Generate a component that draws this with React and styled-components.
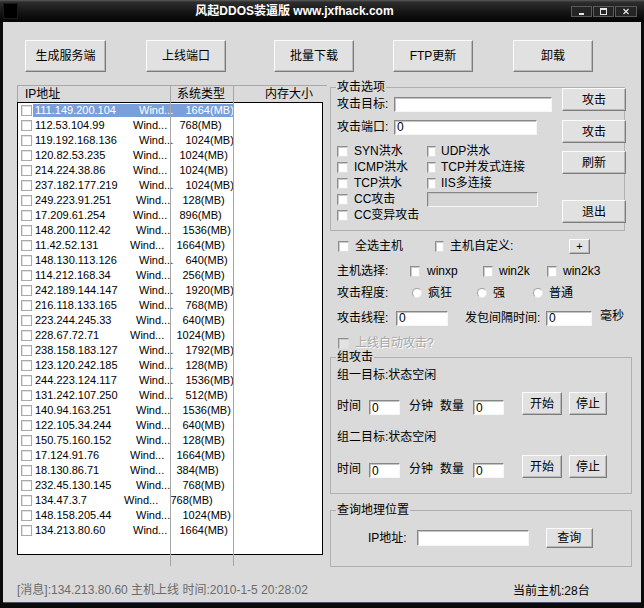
import React from 'react';
import styled, { createGlobalStyle } from 'styled-components';

const FONT = `"Liberation Sans", "Noto Sans CJK SC", sans-serif`;
const BG = '#dadada';

const Global = createGlobalStyle`
  html, body { margin: 0; padding: 0; background: #000; }
  body { font-family: ${FONT}; font-size: 12px; color: #000; }
  * { box-sizing: border-box; }
`;

const Window = styled.div`
  width: 644px;
  height: 608px;
  display: flex;
  flex-direction: column;
  background: #000;
  overflow: hidden;
`;

const TitleBar = styled.div`
  flex: 0 0 22px;
  height: 22px;
  display: flex;
  align-items: center;
  background: linear-gradient(#5c5c5c 0px, #2e2e2e 2px, #151515 55%, #040404 100%);
`;

const AppIcon = styled.div`
  width: 15px;
  height: 16px;
  margin-left: 3px;
  background: #000;
  border: 1px solid #1a1a1a;
`;

const TitleText = styled.div`
  flex: 1;
  text-align: center;
  color: #fff;
  font-weight: bold;
  font-size: 12px;
  line-height: 22px;
  white-space: nowrap;
`;

const CaptionButtons = styled.div`
  display: flex;
  gap: 1px;
  margin-right: 7px;
  margin-top: 1px;
`;

const CaptionBtn = styled.div`
  width: ${p => p.$w}px;
  height: 11px;
  background: #252525;
  border: 1px solid #5a5a5a;
  display: flex;
  align-items: center;
  justify-content: center;
`;

const Body = styled.div`
  flex: 1;
  background: ${BG};
  border-left: 3px solid #0a0a0a;
  border-right: 3px solid #0a0a0a;
  border-bottom: 5px solid #0a0a0a;
  box-shadow: inset 0 -1px 0 #4a5464;
  display: flex;
  flex-direction: column;
`;

const Toolbar = styled.div`
  display: flex;
  padding: 18px 0 0 22px;
`;

const Btn = styled.button`
  flex: none;
  width: ${p => p.$w}px;
  height: ${p => p.$h}px;
  margin-left: ${p => p.$ml || 0}px;
  margin-top: ${p => p.$mt || 0}px;
  padding: 0;
  background: #e1e1e1;
  border: 1px solid;
  border-color: #fbfbfb #7c7c7c #7c7c7c #fbfbfb;
  box-shadow: inset -1px -1px 0 #b8b8b8;
  font-family: ${FONT};
  font-size: 12px;
  color: #000;
  line-height: 1;
`;

const Main = styled.div`
  display: flex;
  margin-top: 8px;
  height: 486px;
`;

const LeftCol = styled.div`
  flex: none;
  width: 327px;
  padding: 5px 0 0 14px;
`;

const ListView = styled.div`
  position: relative;
  width: 310px;
`;

const ListHeader = styled.div`
  display: flex;
  height: 17px;
  border-top: 1px solid #a8a8a8;
  border-left: 1px solid #a8a8a8;
  line-height: 16px;
`;

const HeaderCell = styled.div`
  flex: none;
  width: ${p => p.$w}px;
  padding-left: ${p => p.$pl}px;
  white-space: nowrap;
`;

const ListBox = styled.div`
  width: 306px;
  height: 453px;
  border: 1px solid #000;
  background: #fff;
`;

const ColumnLine = styled.div`
  position: absolute;
  top: 0;
  left: ${p => p.$x}px;
  width: 1px;
  height: 481px;
  background: #a6a6a6;
`;

const Row = styled.div`
  display: flex;
  align-items: center;
  height: 15px;
`;

const RowCheck = styled.span`
  flex: none;
  width: 11px;
  height: 11px;
  margin-left: 3px;
  background: #fff;
  border: 1px solid #a9a9a9;
  box-shadow: inset 1px 1px 0 #e2e2e2;
`;

const RowBody = styled.div`
  flex: none;
  display: flex;
  align-items: center;
  width: 200px;
  height: 13px;
  margin-left: 1px;
  font-size: 11px;
  line-height: 13px;
  white-space: nowrap;
  background: ${p => (p.$selected ? '#7b9fda' : 'transparent')};
  color: ${p => (p.$selected ? '#fff' : '#000')};
`;

const IpCell = styled.span`
  flex: none;
  width: ${p => p.$w}px;
  padding-left: 2px;
`;

const WindCell = styled.span`
  flex: none;
  width: 46.5px;
`;

const MemCell = styled.span`
  flex: none;
`;

const RightCol = styled.div`
  flex: none;
  width: 302px;
  display: flex;
  flex-direction: column;
`;

const Group = styled.div`
  position: relative;
  flex: none;
  width: ${p => p.$w}px;
  margin-top: ${p => p.$mt}px;
  border: 1px solid #b0b0b0;
`;

const GroupTitle = styled.span`
  position: absolute;
  top: -8px;
  left: 5px;
  padding: 0 1px;
  background: ${BG};
  line-height: 15px;
  white-space: nowrap;
`;

const AttackGroup = styled(Group)`
  display: flex;
  align-items: flex-start;
  padding: 0 0 7px 6px;
`;

const Fields = styled.div`
  display: flex;
  flex-direction: column;
`;

const FieldRow = styled.div`
  display: flex;
  align-items: center;
  height: ${p => p.$h || 16}px;
  margin-top: ${p => p.$mt || 0}px;
`;

const Slot = styled.div`
  flex: none;
  width: ${p => p.$w}px;
  margin-left: ${p => p.$ml || 0}px;
  display: flex;
  align-items: center;
`;

const Label = styled.span`
  flex: none;
  white-space: nowrap;
  line-height: 15px;
  margin-left: ${p => p.$ml || 0}px;
  margin-bottom: ${p => p.$mb || 0}px;
  color: ${p => (p.$disabled ? '#a8a8a8' : '#000')};
  text-shadow: ${p => (p.$disabled ? '1px 1px 0 #fff' : 'none')};
`;

const Field = styled.input`
  flex: none;
  width: ${p => p.$w}px;
  height: ${p => p.$h || 15}px;
  margin: 0 0 0 ${p => p.$ml || 0}px;
  padding: 0 2px;
  background: ${p => (p.$disabled ? '#d6d6d6' : '#fff')};
  border: 1px solid;
  border-color: #878787 #f6f6f6 #f6f6f6 #878787;
  box-shadow: inset 1px 1px 0 #c4c4c4;
  font-family: ${FONT};
  font-size: 12px;
  line-height: 13px;
  color: #000;
  outline: none;
`;

const CheckGrid = styled.div`
  display: grid;
  grid-template-columns: 90px auto;
  grid-auto-rows: 16px;
  margin-top: 8px;
  align-items: center;
`;

const CheckItem = styled.label`
  display: inline-flex;
  align-items: center;
  gap: ${p => (p.$gap ?? 6)}px;
  margin-left: ${p => p.$ml || 0}px;
`;

const Box = styled.span`
  flex: none;
  width: ${p => p.$w || 11}px;
  height: 11px;
  background: ${p => (p.$disabled ? '#e3e3e3' : '#fff')};
  border: 1px solid;
  border-color: #8e8e8e #dedede #dedede #8e8e8e;
  box-shadow: inset 1px 1px 0 #c9c9c9;
`;

const RadioDot = styled.span`
  flex: none;
  width: 10px;
  height: 10px;
  border-radius: 50%;
  background: #fff;
  border: 1px solid;
  border-color: #a0a0a0 #e8e8e8 #e8e8e8 #a0a0a0;
`;

const ButtonCol = styled.div`
  display: flex;
  flex-direction: column;
  margin-left: auto;
  margin-right: -2px;
`;

const Middle = styled.div`
  display: flex;
  flex-direction: column;
  padding-left: 7px;
`;

const PlusBtn = styled(Btn)`
  font-size: 11px;
`;

const TeamGroup = styled(Group)`
  padding: 0 0 15px 6px;
`;

const TeamLine = styled.div`
  margin-top: ${p => p.$mt}px;
  line-height: 15px;
  white-space: nowrap;
`;

const TimeRow = styled.div`
  display: flex;
  align-items: flex-end;
  height: 23px;
  margin-top: ${p => p.$mt}px;
`;

const QueryGroup = styled(Group)`
  display: flex;
  align-items: center;
  padding: 17px 0 18px 37px;
`;

const Footer = styled.div`
  display: flex;
  padding: 17px 0 0 14px;
`;

const Status = styled.div`
  flex: none;
  width: 496px;
  line-height: 15px;
  color: #6b6b6b;
  white-space: nowrap;
`;

const HostCount = styled.div`
  padding-top: 1px;
  line-height: 15px;
  white-space: nowrap;
`;

const rows = [
  ['111.149.200.104', '1664(MB)'],
  ['112.53.104.99', '768(MB)'],
  ['119.192.168.136', '1024(MB)'],
  ['120.82.53.235', '1024(MB)'],
  ['214.224.38.86', '1024(MB)'],
  ['237.182.177.219', '1024(MB)'],
  ['249.223.91.251', '128(MB)'],
  ['17.209.61.254', '896(MB)'],
  ['148.200.112.42', '1536(MB)'],
  ['11.42.52.131', '1664(MB)'],
  ['148.130.113.126', '640(MB)'],
  ['114.212.168.34', '256(MB)'],
  ['242.189.144.147', '1920(MB)'],
  ['216.118.133.165', '768(MB)'],
  ['223.244.245.33', '640(MB)'],
  ['228.67.72.71', '1024(MB)'],
  ['238.158.183.127', '1792(MB)'],
  ['123.120.242.185', '128(MB)'],
  ['244.223.124.117', '1536(MB)'],
  ['131.242.107.250', '512(MB)'],
  ['140.94.163.251', '1536(MB)'],
  ['122.105.34.244', '640(MB)'],
  ['150.75.160.152', '128(MB)'],
  ['17.124.91.76', '1664(MB)'],
  ['18.130.86.71', '384(MB)'],
  ['232.45.130.145', '768(MB)'],
  ['134.47.3.7', '768(MB)'],
  ['148.158.205.44', '1024(MB)'],
  ['134.213.80.60', '1664(MB)'],
];

const Check = ({ children, w, gap, ml, disabled }) => (
  <CheckItem $gap={gap} $ml={ml}>
    <Box $w={w} $disabled={disabled} />
    <Label $disabled={disabled}>{children}</Label>
  </CheckItem>
);

const Radio = ({ children }) => (
  <CheckItem $gap={6}>
    <RadioDot />
    <Label>{children}</Label>
  </CheckItem>
);

const TeamRow = ({ mt }) => (
  <TimeRow $mt={mt}>
    <Label $mb={1}>时间</Label>
    <Field $ml={8} $w={31} defaultValue="0" readOnly />
    <Label $ml={9} $mb={1}>分钟</Label>
    <Label $ml={7} $mb={1}>数量</Label>
    <Field $ml={9} $w={31} defaultValue="0" readOnly />
    <Btn $ml={18} $w={40} $h={23}>开始</Btn>
    <Btn $ml={7} $w={38} $h={23}>停止</Btn>
  </TimeRow>
);

export default function App() {
  return (
    <>
      <Global />
      <Window>
        <TitleBar>
          <AppIcon />
          <TitleText>风起DDOS装逼版 www.jxfhack.com</TitleText>
          <CaptionButtons>
            <CaptionBtn $w={21}>
              <svg width="19" height="9" viewBox="0 0 19 9">
                <rect x="7" y="6" width="5" height="2" fill="#e6e6e6" />
              </svg>
            </CaptionBtn>
            <CaptionBtn $w={21}>
              <svg width="19" height="9" viewBox="0 0 19 9">
                <rect x="6.5" y="1.5" width="6" height="6" fill="none" stroke="#e6e6e6" />
                <rect x="6" y="1" width="7" height="2" fill="#e6e6e6" />
              </svg>
            </CaptionBtn>
            <CaptionBtn $w={22}>
              <svg width="20" height="9" viewBox="0 0 20 9">
                <path d="M7.5 2l5 5M12.5 2l-5 5" stroke="#e6e6e6" strokeWidth="1.2" />
              </svg>
            </CaptionBtn>
          </CaptionButtons>
        </TitleBar>

        <Body>
          <Toolbar>
            <Btn $w={81} $h={32}>生成服务端</Btn>
            <Btn $w={80} $h={32} $ml={40}>上线端口</Btn>
            <Btn $w={80} $h={32} $ml={48}>批量下载</Btn>
            <Btn $w={80} $h={32} $ml={39}>FTP更新</Btn>
            <Btn $w={80} $h={32} $ml={40}>卸载</Btn>
          </Toolbar>

          <Main>
            <LeftCol>
              <ListView>
                <ListHeader>
                  <HeaderCell $w={152} $pl={7}>IP地址</HeaderCell>
                  <HeaderCell $w={63} $pl={7}>系统类型</HeaderCell>
                  <HeaderCell $w={94} $pl={32}>内存大小</HeaderCell>
                </ListHeader>
                <ListBox>
                  {rows.map(([ip, mem], i) => (
                    <Row key={ip}>
                      <RowCheck />
                      <RowBody $selected={i === 0}>
                        <IpCell $w={61 + 3 * ip.length}>{ip}</IpCell>
                        <WindCell>Wind...</WindCell>
                        <MemCell>{mem}</MemCell>
                      </RowBody>
                    </Row>
                  ))}
                </ListBox>
                <ColumnLine $x={153} />
                <ColumnLine $x={216} />
              </ListView>
            </LeftCol>

            <RightCol>
              <AttackGroup $w={295} $mt={7}>
                <GroupTitle>攻击选项</GroupTitle>
                <Fields>
                  <FieldRow $mt={8}>
                    <Slot $w={57}><Label>攻击目标:</Label></Slot>
                    <Field $w={158} defaultValue="" readOnly />
                  </FieldRow>
                  <FieldRow $mt={7}>
                    <Slot $w={57}><Label>攻击端口:</Label></Slot>
                    <Field $w={143} defaultValue="0" readOnly />
                  </FieldRow>
                  <CheckGrid>
                    <Check>SYN洪水</Check>
                    <Check w={9} gap={5}>UDP洪水</Check>
                    <Check>ICMP洪水</Check>
                    <Check w={9} gap={5}>TCP并发式连接</Check>
                    <Check>TCP洪水</Check>
                    <Check w={9} gap={5}>IIS多连接</Check>
                    <Check>CC攻击</Check>
                    <Field $w={111} $disabled defaultValue="" readOnly />
                    <Check>CC变异攻击</Check>
                  </CheckGrid>
                </Fields>
                <ButtonCol>
                  <Btn $w={64} $h={23}>攻击</Btn>
                  <Btn $w={64} $h={23} $mt={9}>攻击</Btn>
                  <Btn $w={64} $h={23} $mt={8}>刷新</Btn>
                  <Btn $w={64} $h={23} $mt={26}>退出</Btn>
                </ButtonCol>
              </AttackGroup>

              <Middle>
                <FieldRow $h={17} $mt={7}>
                  <Slot $w={97} $ml={1}><Check>全选主机</Check></Slot>
                  <Slot $w={134}><Check w={9}>主机自定义:</Check></Slot>
                  <PlusBtn $w={21} $h={15}>+</PlusBtn>
                </FieldRow>
                <FieldRow $h={17} $mt={8}>
                  <Slot $w={73}><Label>主机选择:</Label></Slot>
                  <Slot $w={73}><Check w={10} gap={7}>winxp</Check></Slot>
                  <Slot $w={64}><Check w={10}>win2k</Check></Slot>
                  <Check w={10}>win2k3</Check>
                </FieldRow>
                <FieldRow $mt={5}>
                  <Slot $w={75}><Label>攻击程度:</Label></Slot>
                  <Slot $w={65}><Radio>疯狂</Radio></Slot>
                  <Slot $w={56}><Radio>强</Radio></Slot>
                  <Radio>普通</Radio>
                </FieldRow>
                <FieldRow $mt={9}>
                  <Slot $w={59}><Label>攻击线程:</Label></Slot>
                  <Field $w={52} defaultValue="0" readOnly />
                  <Slot $w={81} $ml={17}><Label>发包间隔时间:</Label></Slot>
                  <Field $w={46} defaultValue="0" readOnly />
                  <Label $ml={8} $mb={3}>毫秒</Label>
                </FieldRow>
                <FieldRow $mt={9}>
                  <Slot $w={200} $ml={1}><Check disabled>上线自动攻击?</Check></Slot>
                </FieldRow>
              </Middle>

              <TeamGroup $w={302} $mt={6}>
                <GroupTitle>组攻击</GroupTitle>
                <TeamLine $mt={10}>组一目标:状态空闲</TeamLine>
                <TeamRow mt={9} />
                <TeamLine $mt={15}>组二目标:状态空闲</TeamLine>
                <TeamRow mt={10} />
              </TeamGroup>

              <QueryGroup $w={302} $mt={16}>
                <GroupTitle>查询地理位置</GroupTitle>
                <Label>IP地址:</Label>
                <Field $ml={10} $w={112} $h={16} defaultValue="" readOnly />
                <Btn $ml={17} $w={47} $h={20}>查询</Btn>
              </QueryGroup>
            </RightCol>
          </Main>

          <Footer>
            <Status>[消息]:134.213.80.60 主机上线 时间:2010-1-5 20:28:02</Status>
            <HostCount>当前主机:28台</HostCount>
          </Footer>
        </Body>
      </Window>
    </>
  );
}
